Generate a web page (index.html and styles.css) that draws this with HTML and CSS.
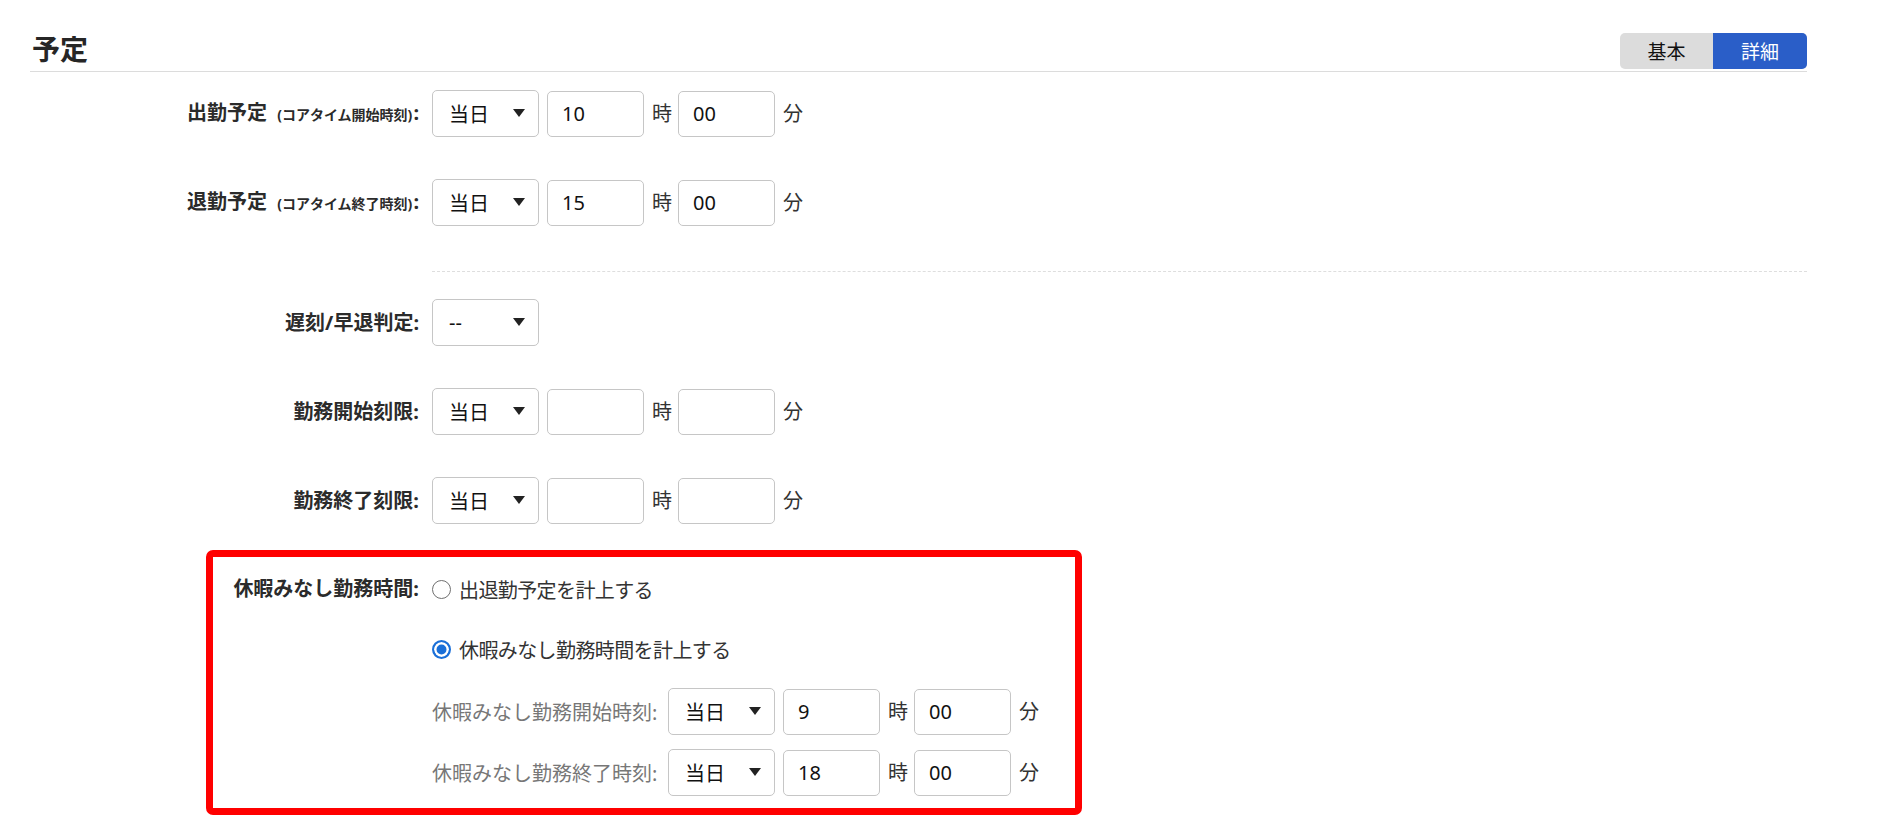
FILE: index.html
```html
<!DOCTYPE html>
<html lang="ja">
<head>
<meta charset="utf-8">
<title>予定</title>
<link rel="stylesheet" href="styles.css">
</head>
<body>
<div class="page">
  <header class="head">
    <h2 class="title">予定</h2>
    <div class="toggle">
      <span class="tg">基本</span>
      <span class="tg on">詳細</span>
    </div>
  </header>

  <div class="form">
    <div class="row first">
      <div class="lbl">出勤予定 <small>(コアタイム開始時刻)</small>:</div>
      <div class="ctrl">
        <div class="sel"><span>当日</span><svg width="12" height="8" viewBox="0 0 12 8"><path d="M0 0H12L6 8Z" fill="#222"/></svg></div>
        <input class="num" type="text" value="10">
        <span class="unit">時</span>
        <input class="num" type="text" value="00">
        <span class="unit">分</span>
      </div>
    </div>

    <div class="row">
      <div class="lbl">退勤予定 <small>(コアタイム終了時刻)</small>:</div>
      <div class="ctrl">
        <div class="sel"><span>当日</span><svg width="12" height="8" viewBox="0 0 12 8"><path d="M0 0H12L6 8Z" fill="#222"/></svg></div>
        <input class="num" type="text" value="15">
        <span class="unit">時</span>
        <input class="num" type="text" value="00">
        <span class="unit">分</span>
      </div>
    </div>

    <div class="dash"></div>

    <div class="row after-dash">
      <div class="lbl">遅刻/早退判定:</div>
      <div class="ctrl">
        <div class="sel"><span>--</span><svg width="12" height="8" viewBox="0 0 12 8"><path d="M0 0H12L6 8Z" fill="#222"/></svg></div>
      </div>
    </div>

    <div class="row">
      <div class="lbl">勤務開始刻限:</div>
      <div class="ctrl">
        <div class="sel"><span>当日</span><svg width="12" height="8" viewBox="0 0 12 8"><path d="M0 0H12L6 8Z" fill="#222"/></svg></div>
        <input class="num" type="text" value="">
        <span class="unit">時</span>
        <input class="num" type="text" value="">
        <span class="unit">分</span>
      </div>
    </div>

    <div class="row">
      <div class="lbl">勤務終了刻限:</div>
      <div class="ctrl">
        <div class="sel"><span>当日</span><svg width="12" height="8" viewBox="0 0 12 8"><path d="M0 0H12L6 8Z" fill="#222"/></svg></div>
        <input class="num" type="text" value="">
        <span class="unit">時</span>
        <input class="num" type="text" value="">
        <span class="unit">分</span>
      </div>
    </div>

    <div class="box">
      <div class="lbl box-lbl">休暇みなし勤務時間:</div>
      <label class="opt"><span class="radio"></span>出退勤予定を計上する</label>
      <label class="opt opt2"><span class="radio checked"></span>休暇みなし勤務時間を計上する</label>
      <div class="sub sub1">
        <span class="sublbl">休暇みなし勤務開始時刻:</span>
        <div class="sel"><span>当日</span><svg width="12" height="8" viewBox="0 0 12 8"><path d="M0 0H12L6 8Z" fill="#222"/></svg></div>
        <input class="num" type="text" value="9">
        <span class="unit">時</span>
        <input class="num" type="text" value="00">
        <span class="unit">分</span>
      </div>
      <div class="sub sub2">
        <span class="sublbl">休暇みなし勤務終了時刻:</span>
        <div class="sel"><span>当日</span><svg width="12" height="8" viewBox="0 0 12 8"><path d="M0 0H12L6 8Z" fill="#222"/></svg></div>
        <input class="num" type="text" value="18">
        <span class="unit">時</span>
        <input class="num" type="text" value="00">
        <span class="unit">分</span>
      </div>
    </div>
  </div>
</div>
</body>
</html>
```
FILE: styles.css
```css
* { box-sizing: border-box; }

body {
  margin: 0;
  background: #fff;
  color: #333;
  font-family: "Noto Sans", "Noto Sans CJK JP", sans-serif;
  font-size: 20px;
}

.page {
  width: 1807px;
  padding-left: 30px;
}

.head {
  display: flex;
  justify-content: space-between;
  align-items: center;
  padding-top: 33px;
  padding-bottom: 2px;
  border-bottom: 1px solid #dcdcdc;
}

.title {
  margin: -4px 0 0 2px;
  font-size: 28px;
  line-height: 36px;
  font-weight: 700;
  color: #262626;
}

.toggle {
  display: flex;
  height: 36px;
  border-radius: 5px;
  overflow: hidden;
  background: #dcdcdc;
}

.tg {
  width: 93px;
  display: flex;
  align-items: center;
  justify-content: center;
  font-size: 19px;
  color: #111;
}

.tg.on {
  width: 94px;
  background: #2a5ec8;
  color: #fff;
}

.form {
  display: flex;
  flex-direction: column;
}

.row {
  display: grid;
  grid-template-columns: 389px auto;
  column-gap: 13px;
  align-items: center;
  height: 47px;
  margin-top: 42px;
}

.row.first { margin-top: 18px; }
.row.after-dash { margin-top: 27px; }

.lbl {
  text-align: right;
  font-weight: 700;
  color: #2b2b2b;
  white-space: nowrap;
  line-height: 30px;
}

.lbl small {
  font-size: 14px;
  font-weight: 700;
  margin-left: 5px;
  margin-right: 1px;
}

.ctrl {
  display: flex;
  align-items: center;
}

.sel {
  width: 107px;
  height: 47px;
  display: flex;
  align-items: center;
  justify-content: space-between;
  padding: 0 13px 0 16px;
  border: 1px solid #c6c6c6;
  border-radius: 5px;
  color: #111;
  background: #fff;
  margin-right: 8px;
}

.sel svg { margin-top: -2px; }

.num {
  width: 97px;
  height: 46px;
  padding: 0 14px;
  border: 1px solid #c6c6c6;
  border-radius: 5px;
  font-family: "Noto Sans", "Noto Sans CJK JP", sans-serif;
  font-size: 20px;
  color: #111;
  background: #fff;
  outline: none;
}

.unit {
  margin: 0 6px 0 8px;
  line-height: 30px;
  color: #333;
}

.dash {
  margin: 45px 0 0 402px;
  border-top: 1px dashed #dedede;
}

.box {
  display: grid;
  grid-template-columns: 206px auto;
  column-gap: 13px;
  width: 876px;
  margin: 26px 0 0 176px;
  padding: 17px 0 12px;
  border: 7px solid #ff0000;
  border-radius: 7px;
}

.box-lbl { grid-column: 1; grid-row: 1; }

.opt {
  grid-column: 2;
  display: flex;
  align-items: center;
  height: 30px;
  color: #333;
  white-space: nowrap;
  letter-spacing: -0.6px;
}

.opt2 { margin-top: 30px; }

.radio {
  width: 19px;
  height: 19px;
  border-radius: 50%;
  border: 1px solid #6f6f6f;
  background: #fff;
  margin-right: 8px;
  flex: none;
}

.radio.checked {
  border: 2px solid #1a6fd8;
  box-shadow: inset 0 0 0 2.5px #fff;
  background: #1a6fd8;
}

.sub {
  grid-column: 2;
  display: flex;
  align-items: center;
  height: 47px;
}

.sub1 { margin-top: 24px; }
.sub2 { margin-top: 14px; }

.sublbl {
  width: 226px;
  margin-right: 10px;
  color: #777;
  white-space: nowrap;
}
```
